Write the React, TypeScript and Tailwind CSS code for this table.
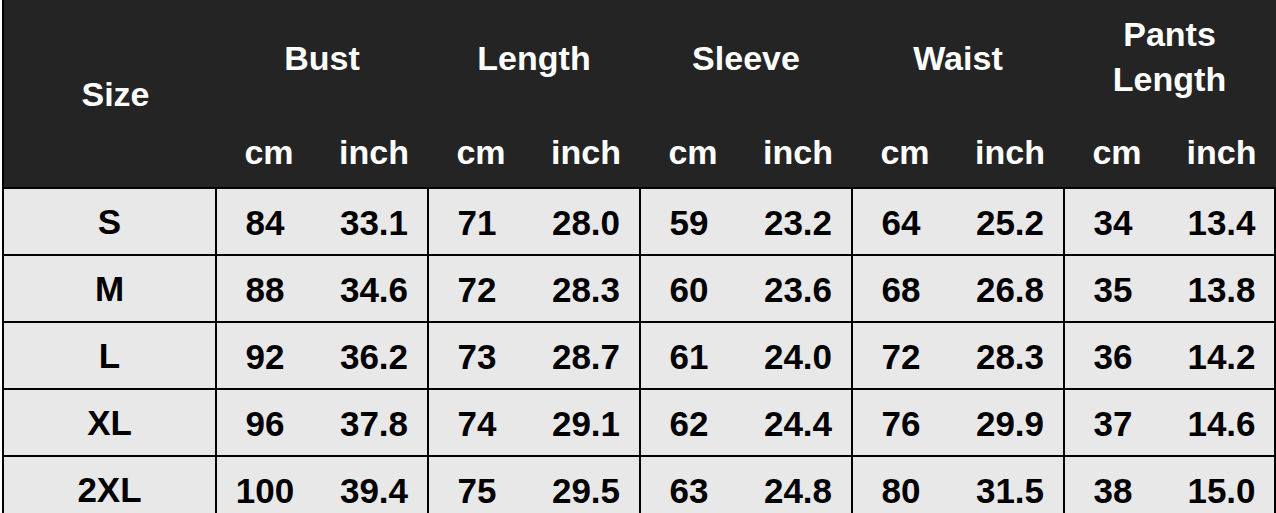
const GROUPS = ["Bust", "Length", "Sleeve", "Waist", "Pants Length"];

const ROWS: [string, ...string[]][] = [
  ["S", "84", "33.1", "71", "28.0", "59", "23.2", "64", "25.2", "34", "13.4"],
  ["M", "88", "34.6", "72", "28.3", "60", "23.6", "68", "26.8", "35", "13.8"],
  ["L", "92", "36.2", "73", "28.7", "61", "24.0", "72", "28.3", "36", "14.2"],
  ["XL", "96", "37.8", "74", "29.1", "62", "24.4", "76", "29.9", "37", "14.6"],
  ["2XL", "100", "39.4", "75", "29.5", "63", "24.8", "80", "31.5", "38", "15.0"],
];

export default function App() {
  return (
    <div className="w-[1276px] bg-white pl-[2px] font-['Liberation_Sans',Arial,sans-serif] font-bold leading-none">
      <div className="border-l-2 border-black">
        {/* header */}
        <div className="flex h-[189px] bg-[#242424] text-white text-[34px] border-b-2 border-black">
          <div className="w-[213px] flex items-center justify-center pl-[10px]">Size</div>
          {GROUPS.map((g, i) => (
            <div key={g} className={`flex flex-col ${i === 4 ? "w-[211px]" : "w-[212px]"} border-r-2 border-[#242424]`}>
              <div className="h-[115px] flex items-center justify-center text-center">
                {g === "Pants Length" ? (
                  <span className="leading-[45px] -mt-[2px]">
                    Pants
                    <br />
                    Length
                  </span>
                ) : (
                  g
                )}
              </div>
              <div className="flex-1 flex items-center pt-[2px]">
                <div className="w-[104px] text-center">cm</div>
                <div className="flex-1 text-center">inch</div>
              </div>
            </div>
          ))}
        </div>

        {/* body */}
        {ROWS.map(([size, ...vals]) => (
          <div key={size} className="flex h-[67px] bg-[#e8e8e8] text-black text-[35px] border-b-2 border-black">
            <div className="w-[213px] flex items-center justify-center border-r-2 border-black">{size}</div>
            {[0, 1, 2, 3, 4].map((g) => (
              <div key={g} className={`flex items-center pt-[2px] ${g === 4 ? "w-[211px]" : "w-[212px]"} border-r-2 border-black`}>
                <div className="w-[96px] text-center">{vals[g * 2]}</div>
                <div className="flex-1 pl-[8px] text-center">{vals[g * 2 + 1]}</div>
              </div>
            ))}
          </div>
        ))}
      </div>
    </div>
  );
}
